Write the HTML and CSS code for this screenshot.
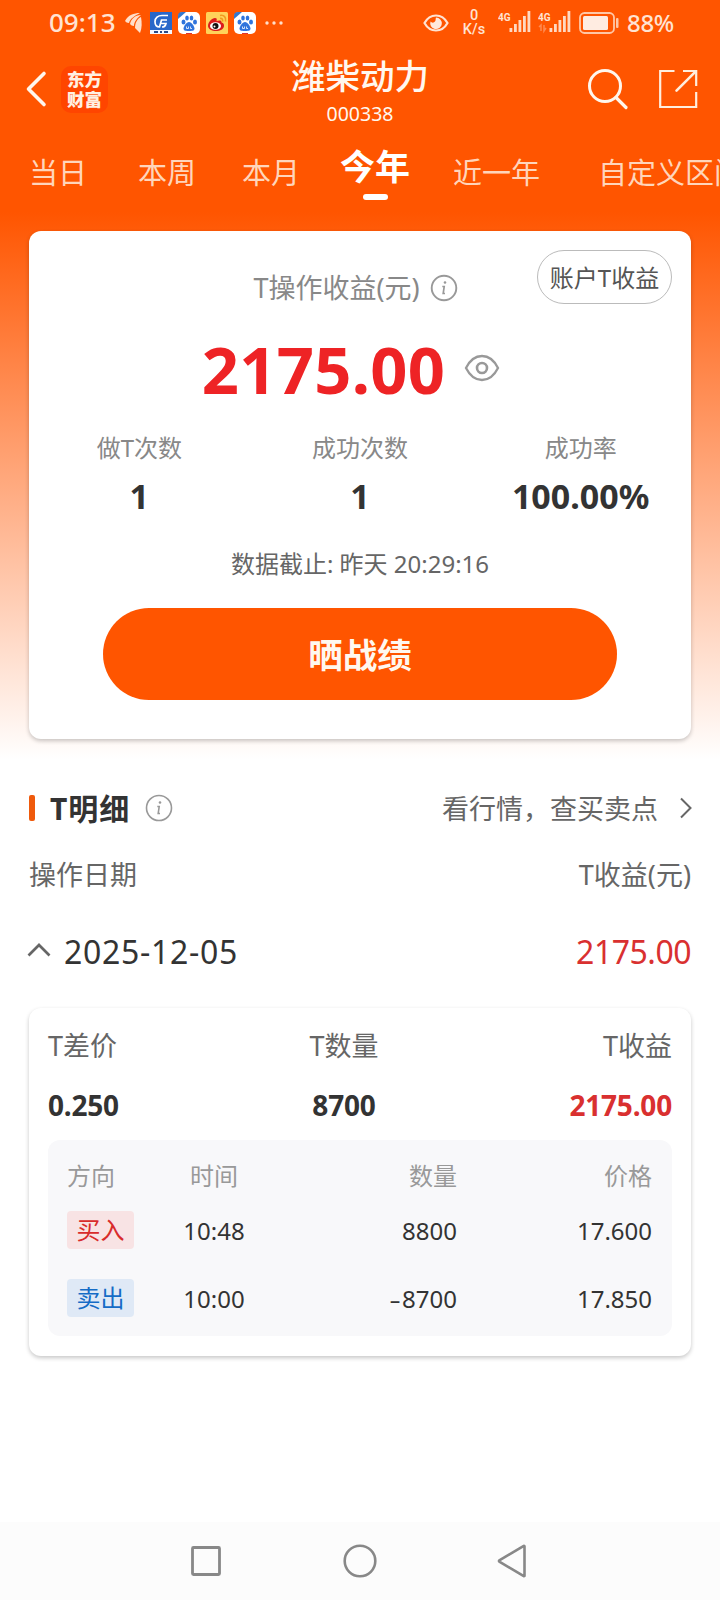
FILE: index.html
```html
<!DOCTYPE html>
<html lang="zh-CN">
<head>
<meta charset="utf-8">
<title>潍柴动力</title>
<link rel="stylesheet" href="styles.css">
</head>
<body>
<div class="screen">
  <div class="status">
    <span class="clock">09:13</span>
    <svg class="s-huawei" width="18" height="20" viewBox="0 0 18 20" fill="#ffdfca"><path d="M0 8C3 2 9 0 15 0 9 3 5 6 4 10 2 10 1 9 0 8z"/><path d="M5 11C6 6 10 2 16 2 12 5 9 9 9 13 7 13 6 12 5 11z"/><path d="M10 15C10 10 12 6 16 4c1 6 1 11-1 16z"/></svg>
    <svg class="s-app" width="22" height="22" viewBox="0 0 22 22"><rect width="22" height="22" fill="#2867c9"/><rect y="18" width="22" height="4" fill="#f4f7ff"/><path d="M18 3.500H12C8 3.500 5 6 5 9.500c0 4 2 5.500 4.500 5.500l2-7H17M11 11.500h5c-.5 2.500-2 3.500-4 3.500" fill="none" stroke="#fff" stroke-width="1.700"/><path d="M4 20h4M10 20h2M14 20h4" stroke="#2b4a86" stroke-width="2"/></svg>
    <svg class="s-app" width="22" height="22" viewBox="0 0 22 22"><rect width="22" height="22" rx="5" fill="#fff"/><path d="M0 7V4a4 4 0 0 1 4-4h4z" fill="#3377cd"/><g fill="#2f74dc"><ellipse cx="5.500" cy="10" rx="2" ry="2.500"/><ellipse cx="9" cy="6" rx="1.800" ry="2.500"/><ellipse cx="13.500" cy="6" rx="1.800" ry="2.500"/><ellipse cx="17" cy="10" rx="2" ry="2.500"/><path d="M11 10c2.500 0 5.500 4.500 5.500 6.500 0 2.500-3 2.500-5.500 2.500s-5.500 0-5.500-2.500c0-2 3-6.500 5.500-6.500z"/></g><path d="M8.500 14.500v2h2v-2M12.500 14.500v2h1.500" fill="none" stroke="#fff" stroke-width=".8"/><path d="M8 21h6v1H8z" fill="#d33"/></svg>
    <svg class="s-app" width="22" height="22" viewBox="0 0 22 22"><rect width="22" height="22" rx="1.500" fill="#ffd35a"/><path d="M2 14c0-4 4-8 7-8 2 0 2 1 1.500 3C13 8 16 8 15.500 10.500 18 11 18 12.500 18 14c0 3-4 5-8 5s-8-2-8-5z" fill="#dc1c1c"/><ellipse cx="9.500" cy="14" rx="5.500" ry="3.800" fill="#fff"/><circle cx="9.500" cy="14" r="3" fill="#111"/><circle cx="8.500" cy="14.500" r="1" fill="#fff"/><path d="M14 6.500c2-.5 3 1 2.500 3M14 3.500c4-1 6.500 2 5.500 6" fill="none" stroke="#f29a1f" stroke-width="1.600"/></svg>
    <svg class="s-app" width="22" height="22" viewBox="0 0 22 22"><rect width="22" height="22" rx="5" fill="#fff"/><path d="M0 7V4a4 4 0 0 1 4-4h4z" fill="#3377cd"/><g fill="#2f74dc"><ellipse cx="5.500" cy="10" rx="2" ry="2.500"/><ellipse cx="9" cy="6" rx="1.800" ry="2.500"/><ellipse cx="13.500" cy="6" rx="1.800" ry="2.500"/><ellipse cx="17" cy="10" rx="2" ry="2.500"/><path d="M11 10c2.500 0 5.500 4.500 5.500 6.500 0 2.500-3 2.500-5.500 2.500s-5.500 0-5.500-2.500c0-2 3-6.500 5.500-6.500z"/></g><path d="M8.500 14.500v2h2v-2M12.500 14.500v2h1.500" fill="none" stroke="#fff" stroke-width=".8"/><path d="M8 21h6v1H8z" fill="#d33"/></svg>
    <svg class="s-dots" width="18" height="4" viewBox="0 0 18 4" fill="#ffdfca"><circle cx="2" cy="2" r="1.700"/><circle cx="9" cy="2" r="1.700"/><circle cx="16" cy="2" r="1.700"/></svg>
    <svg class="s-eye" width="26" height="20" viewBox="0 0 26 20"><path d="M1.500 10C7 0 19 0 24.500 10 19 20 7 20 1.500 10z" fill="none" stroke="#ffe3d2" stroke-width="2.200"/><path d="M13 4.500a5.800 5.800 0 1 1-5.500 4c1 1.500 3.500 1.500 4.500 0s.5-3 1-4z" fill="#ffe9dd"/></svg>
    <span class="speed"><span>0</span><span>K/s</span></span>
    <svg class="s-sig1" width="34" height="24" viewBox="0 0 34 24"><text class="sig-text" x="0" y="10">4G</text><g fill="#ffd9c2"><rect x="11.500" y="17" width="2.800" height="4"/><rect x="16" y="13" width="2.800" height="8"/><rect x="20.500" y="9" width="2.800" height="12"/><rect x="25" y="5" width="2.800" height="16"/><rect x="29.500" y="0" width="2.800" height="21"/></g></svg>
    <svg class="s-sig2" width="34" height="24" viewBox="0 0 34 24"><text class="sig-text" x="0" y="10">4G</text><path d="M1 16l2-2v6M6 14v6l2-3" fill="none" stroke="#ff8a50" stroke-width="1.500"/><g fill="#ffd9c2"><rect x="11.500" y="17" width="2.800" height="4"/><rect x="16" y="13" width="2.800" height="8"/><rect x="20.500" y="9" width="2.800" height="12"/><rect x="25" y="5" width="2.800" height="16"/><rect x="29.500" y="0" width="2.800" height="21"/></g></svg>
    <svg class="s-bat" width="42" height="22" viewBox="0 0 42 22"><rect x="1" y="1" width="34" height="20" rx="4.500" fill="none" stroke="#ffc7a6" stroke-width="1.800"/><rect x="4" y="4" width="25" height="14" rx="1.500" fill="#ffece1"/><rect x="37" y="6" width="2.500" height="10" rx="1" fill="#ffc7a6"/></svg>
    <span class="percent">88%</span>
  </div>

  <div class="header">
    <svg class="back" width="22" height="38" viewBox="0 0 22 38"><path d="M19 3.500L3.500 19 19 34.500" fill="none" stroke="#fff6ec" stroke-width="3.600" stroke-linecap="round" stroke-linejoin="round"/></svg>
    <div class="logo"><span>东方</span><span>财富</span></div>
    <div class="heading"><div class="name">潍柴动力</div><div class="code">000338</div></div>
    <svg class="search" width="42" height="42" viewBox="0 0 42 42" fill="none" stroke="#fff6ec"><circle cx="18" cy="18" r="15.500" stroke-width="3"/><path d="M29 29.500L39 39.500" stroke-width="3.200" stroke-linecap="round"/></svg>
    <svg class="share" width="40" height="40" viewBox="0 0 40 40" fill="none" stroke="#ffeede" stroke-width="2.200"><path d="M16.500 2H2.200v36h36V23M25 2h13.200v15"/><path d="M37.500 2.700L18.500 21.700" stroke-width="2.600" stroke-linecap="round"/></svg>
  </div>

  <div class="tabs">
    <span>当日</span><span class="t2">本周</span><span class="t3">本月</span><span class="t4 active">今年<i></i></span><span class="t5">近一年</span><span class="t6">自定义区间</span>
  </div>

  <div class="card summary">
    <button class="account">账户T收益</button>
    <div class="profit-title">T操作收益(元)<svg class="info" width="28" height="28" viewBox="0 0 28 28"><circle cx="14" cy="14" r="12.300" fill="none" stroke="#999" stroke-width="1.900"/><circle cx="15" cy="8.500" r="1.300" fill="#999"/><path d="M12.300 12.500h1.900l-1 7h1.800" fill="none" stroke="#999" stroke-width="1.700"/></svg></div>
    <div class="profit"><b>2175.00</b><svg width="36" height="28" viewBox="0 0 36 28" fill="none" stroke="#999" stroke-width="2.300"><path d="M2 14C6 6 11.500 2 18 2s12 4 16 12c-4 8-9.500 12-16 12S6 22 2 14z"/><circle cx="18" cy="14" r="5" stroke-width="2.600"/></svg></div>
    <div class="stats">
      <div><span>做T次数</span><b>1</b></div>
      <div><span>成功次数</span><b>1</b></div>
      <div><span>成功率</span><b>100.00%</b></div>
    </div>
    <div class="deadline">数据截止: 昨天 20:29:16</div>
    <button class="show">晒战绩</button>
  </div>

  <div class="section">
    <i class="mark"></i><b>T明细</b>
    <svg class="info" width="28" height="28" viewBox="0 0 28 28"><circle cx="14" cy="14" r="12.500" fill="none" stroke="#999" stroke-width="1.600"/><circle cx="15" cy="8.500" r="1.300" fill="#999"/><path d="M12.300 12.500h1.900l-1 7h1.800" fill="none" stroke="#999" stroke-width="1.600"/></svg>
    <span class="quote">看行情，查买卖点</span>
    <svg class="chevron" width="12" height="22" viewBox="0 0 12 22"><path d="M1 1.500L10.500 11 1 20.500" fill="none" stroke="#666" stroke-width="2"/></svg>
  </div>
  <div class="columns"><span>操作日期</span><span>T收益(元)</span></div>
  <div class="day">
    <svg width="24" height="16" viewBox="0 0 24 16"><path d="M1.500 12.500L12 2l10.500 10.500" fill="none" stroke="#666" stroke-width="2.700"/></svg>
    <span class="date">2025-12-05</span><span class="amount">2175.00</span>
  </div>

  <div class="card detail">
    <div class="totals"><span>T差价</span><span>T数量</span><span>T收益</span></div>
    <div class="totals values"><b>0.250</b><b>8700</b><b class="red">2175.00</b></div>
    <div class="trades">
      <div class="row head"><span>方向</span><span>时间</span><span>数量</span><span>价格</span></div>
      <div class="row"><span><em class="buy">买入</em></span><span>10:48</span><span>8800</span><span>17.600</span></div>
      <div class="row"><span><em class="sell">卖出</em></span><span>10:00</span><span><span class="minus">-</span>8700</span><span>17.850</span></div>
    </div>
  </div>

  <div class="nav">
    <svg width="34" height="34" viewBox="0 0 34 34"><rect x="3.500" y="3.500" width="27" height="27" rx="1" fill="none" stroke="#888" stroke-width="2.800"/></svg>
    <svg width="34" height="34" viewBox="0 0 34 34"><circle cx="17" cy="17" r="15.300" fill="none" stroke="#888" stroke-width="2.600"/></svg>
    <svg width="34" height="34" viewBox="0 0 34 34"><path d="M27.500 2.200v29.600a.5.500 0 0 1-.7.300L2.300 17.600a.7.700 0 0 1 0-1.200L26.800 1.900a.5.500 0 0 1 .7.300z" fill="none" stroke="#888" stroke-width="2.600" stroke-linejoin="round"/></svg>
  </div>
</div>
</body>
</html>
```

FILE: styles.css
```css
* { box-sizing: border-box; }
body {
  margin: 0;
  font-family: "Noto Sans", "Noto Sans CJK SC", sans-serif;
  color: #333;
}
svg { display: block; flex: none; }
button { font-family: inherit; padding: 0; }
span, b { white-space: nowrap; }
.screen {
  width: 720px;
  height: 1600px;
  overflow: hidden;
  display: flex;
  flex-direction: column;
  background: linear-gradient(#ff5500 0, #ff5500 212px, #fff 760px);
}

/* Status bar */
.status { height: 46px; display: flex; align-items: center; padding-left: 49px; color: #ffe3d2; flex: none; }
.clock { width: 68px; font-size: 26px; line-height: 44px; padding-bottom: 2px; font-weight: 500; }
.s-huawei { margin-left: 8px; }
.s-app { margin-left: 6px; }
.s-huawei + .s-app { margin-left: 7px; }
.s-dots { margin-left: 9px; }
.s-eye { margin-left: 140px; }
.speed { width: 28px; margin-left: 11px; display: flex; flex-direction: column; text-align: center; font: 500 14.5px/14px "Roboto", sans-serif; }
.s-sig1 { margin-left: 10px; }
.s-sig2 { margin-left: 6px; }
.s-bat { margin-left: 7px; }
.sig-text { font: bold 10px "Roboto", sans-serif; fill: #ffe3d2; }
.percent { margin-left: 6px; font-size: 24px; line-height: 46px; font-weight: 500; letter-spacing: -0.3px; }

/* Title bar */
.header { height: 87px; display: flex; align-items: center; padding: 0 21px 1px 25px; flex: none; color: #fff8ef; }
.logo { width: 47px; height: 47px; margin-left: 14px; border-radius: 10px; background: #ff4500; display: flex; flex-direction: column; align-items: center; justify-content: center; font: 900 17.5px/20px "Noto Sans CJK SC", sans-serif; color: #fff0e2; }
.heading { width: 240px; margin-left: 132px; text-align: center; align-self: flex-start; padding-top: 8px; }
.name { font-size: 34.5px; line-height: 44px; font-weight: 500; }
.code { font-size: 19.5px; line-height: 32px; font-weight: 400; }
.search { margin-left: 107px; }
.share { margin-left: 29px; }

/* Period tabs */
.tabs { height: 98px; display: flex; padding-left: 29px; font-size: 29px; line-height: 80px; color: #ffd5bb; flex: none; }
.tabs span { flex: none; }
.t2 { margin-left: 51px; }
.t3 { margin-left: 46px; }
.t4 { margin-left: 40px; }
.t5 { margin-left: 43px; }
.t6 { margin-left: 58px; }
.tabs .active { font-size: 35px; line-height: 68px; font-weight: 700; color: #fff; display: flex; flex-direction: column; align-items: center; }
.active i { width: 25px; height: 6px; border-radius: 3px; background: #fff; margin-top: -7px; }

/* Cards */
.card { width: 662px; margin-left: 29px; background: #fff; border-radius: 12px; box-shadow: 0 2px 4px rgba(0, 0, 0, .22); flex: none; position: relative; }
.summary { height: 508px; display: flex; flex-direction: column; align-items: center; }
.account { position: absolute; right: 19px; top: 19px; width: 135px; height: 54px; border: 1px solid #bbb; border-radius: 27px; background: #fff; font-size: 24px; line-height: 52px; padding-top: 1px; color: #555; }
.profit-title { margin-top: 36px; padding-right: 9px; height: 42px; display: flex; align-items: center; font-size: 27px; line-height: 42px; color: #888; }
.profit-title .info { margin-left: 10px; margin-top: -1px; }
.profit { height: 90px; margin-top: 15px; padding-right: 18px; display: flex; align-items: center; }
.profit b { font-size: 65px; line-height: 90px; color: #ee2325; letter-spacing: .3px; }
.profit svg { margin-left: 19px; margin-top: -2px; }
.stats { display: grid; grid-template-columns: repeat(3, 1fr); width: 100%; text-align: center; margin-top: 14px; }
.stats span, .stats b { display: block; }
.stats span { font-size: 24px; line-height: 40px; color: #888; }
.stats b { font-size: 34px; line-height: 56px; margin-bottom: 2px; }
.deadline { font-size: 24px; line-height: 40px; margin-top: 18px; color: #666; }
.show { width: 514px; height: 92px; margin-top: 24px; border: 0; border-radius: 46px; background: #ff5500; color: #fff8ef; font-size: 34.5px; line-height: 92px; padding-top: 1px; font-weight: 700; }

/* Section heading and day row */
.section { height: 40px; margin: 49px 28px 0 29px; display: flex; align-items: center; flex: none; line-height: 40px; }
.mark { width: 6px; height: 26px; border-radius: 2px; background: #ef5a0c; }
.section b { font-size: 30px; margin-left: 15px; padding-top: 1px; letter-spacing: 1px; }
.section .info { margin-left: 15px; }
.quote { margin-left: auto; padding-top: 2px; font-size: 27px; color: #666; }
.chevron { margin-left: 22px; }
.columns { height: 40px; margin: 27px 29px 0; display: flex; justify-content: space-between; font-size: 27px; line-height: 40px; color: #666; flex: none; }
.day { height: 60px; margin: 26px 29px 0 27px; display: flex; align-items: center; line-height: 60px; font-size: 32px; flex: none; }
.date, .amount { padding-top: 2px; }
.date { margin-left: 13px; letter-spacing: .7px; }
.amount { margin-left: auto; color: #d93030; letter-spacing: -.5px; }

/* Trade details */
.detail { height: 348px; margin-top: 27px; padding: 18px 19px; }
.totals { display: grid; grid-template-columns: 1fr 1fr 1fr; font-size: 27px; line-height: 40px; color: #666; }
.totals > :nth-child(2) { text-align: center; padding-right: 32px; }
.totals > :nth-child(3) { text-align: right; }
.values { font-size: 28px; line-height: 40px; margin-top: 19px; color: #333; letter-spacing: -.2px; }
.values .red { color: #d93030; }
.trades { height: 196px; margin-top: 15px; padding: 2px 20px 0 19px; border-radius: 12px; background: #f8f8fa; }
.row { height: 68px; display: grid; grid-template-columns: 108px 78px 204px 195px; grid-template-rows: 68px; align-items: center; font-size: 24px; line-height: 66px; }
.head { height: 54px; grid-template-rows: 40px; padding-top: 14px; line-height: 40px; color: #999; }
.row > :nth-child(2) { text-align: center; }
.row > :nth-child(n+3) { text-align: right; }
.row:not(.head) > :nth-child(n+2) { padding-top: 2px; }
.row em { display: block; width: 67px; height: 38px; border-radius: 4px; text-align: center; font-style: normal; line-height: 37px; }
.minus { display: inline-block; margin-right: 1px; transform: scaleX(1.5); transform-origin: right; }
.buy { background: #f8e3e4; color: #d82c2c; }
.sell { background: #dfe9f6; color: #156cc6; }

/* System navigation */
.nav { height: 78px; margin-top: auto; display: flex; justify-content: center; align-items: center; gap: 120px; background: #fcfcfc; flex: none; }
```
